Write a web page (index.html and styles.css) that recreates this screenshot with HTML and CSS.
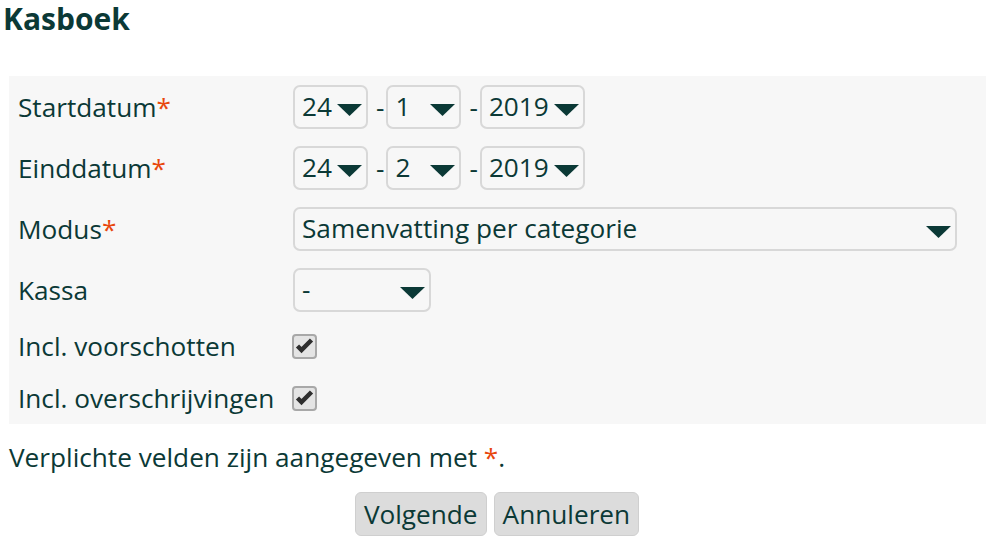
FILE: index.html
```html
<!DOCTYPE html>
<html lang="nl">
<head>
<meta charset="utf-8">
<title>Kasboek</title>
<link rel="stylesheet" href="styles.css">
</head>
<body>
<h1 class="title">Kasboek</h1>
<div class="panel">
  <div class="row">
    <div class="label">Startdatum<span class="req">*</span></div>
    <div class="field">
      <div class="sel w-day"><span>24</span><svg class="arrow" viewBox="0 0 25 12"><polygon points="0,0 25,0 12.5,12"/></svg></div>
      <span class="dash">-</span>
      <div class="sel w-day"><span>1</span><svg class="arrow" viewBox="0 0 25 12"><polygon points="0,0 25,0 12.5,12"/></svg></div>
      <span class="dash">-</span>
      <div class="sel w-year"><span>2019</span><svg class="arrow" viewBox="0 0 25 12"><polygon points="0,0 25,0 12.5,12"/></svg></div>
    </div>
  </div>
  <div class="row">
    <div class="label">Einddatum<span class="req">*</span></div>
    <div class="field">
      <div class="sel w-day"><span>24</span><svg class="arrow" viewBox="0 0 25 12"><polygon points="0,0 25,0 12.5,12"/></svg></div>
      <span class="dash">-</span>
      <div class="sel w-day"><span>2</span><svg class="arrow" viewBox="0 0 25 12"><polygon points="0,0 25,0 12.5,12"/></svg></div>
      <span class="dash">-</span>
      <div class="sel w-year"><span>2019</span><svg class="arrow" viewBox="0 0 25 12"><polygon points="0,0 25,0 12.5,12"/></svg></div>
    </div>
  </div>
  <div class="row">
    <div class="label">Modus<span class="req">*</span></div>
    <div class="field">
      <div class="sel w-mode"><span>Samenvatting per categorie</span><svg class="arrow" viewBox="0 0 25 12"><polygon points="0,0 25,0 12.5,12"/></svg></div>
    </div>
  </div>
  <div class="row">
    <div class="label">Kassa</div>
    <div class="field">
      <div class="sel w-kassa"><span>-</span><svg class="arrow" viewBox="0 0 25 12"><polygon points="0,0 25,0 12.5,12"/></svg></div>
    </div>
  </div>
  <div class="row row-check">
    <div class="label">Incl. voorschotten</div>
    <div class="field">
      <span class="check"><svg viewBox="0 0 21 21"><polyline points="3.5,10 7.5,14 17.5,4"/></svg></span>
    </div>
  </div>
  <div class="row row-check">
    <div class="label">Incl. overschrijvingen</div>
    <div class="field">
      <span class="check"><svg viewBox="0 0 21 21"><polyline points="3.5,10 7.5,14 17.5,4"/></svg></span>
    </div>
  </div>
</div>
<p class="note">Verplichte velden zijn aangegeven met <span class="req">*</span>.</p>
<div class="buttons">
  <button class="btn">Volgende</button>
  <button class="btn">Annuleren</button>
</div>
</body>
</html>
```
FILE: styles.css
```css
html, body {
  margin: 0;
  padding: 0;
  background: #ffffff;
}
body {
  font-family: "Open Sans", "Noto Sans", sans-serif;
  font-size: 26.2px;
  color: #0b3936;
}
.title {
  margin: 0;
  padding: 2px 0 0 3px;
  font-size: 30px;
  line-height: 34px;
  font-weight: 700;
}
.panel {
  margin: 40px 8px 0 9px;
  background: #f7f7f7;
}
.row {
  display: flex;
  align-items: center;
  padding: 8.5px 9px;
}
.row-check {
  line-height: 35px;
}
.label {
  width: 275px;
  flex: none;
}
.req {
  color: #e8470e;
}
.field {
  display: flex;
  align-items: center;
}
.sel {
  box-sizing: border-box;
  height: 44px;
  display: flex;
  align-items: center;
  justify-content: space-between;
  border: 2px solid #d8d8d8;
  border-radius: 7px;
  padding: 0 4px 0 7px;
  background: #f7f7f7;
  line-height: 1;
}
.w-day { width: 75px; }
.w-year { width: 105px; }
.w-mode { width: 664px; }
.w-kassa { width: 138px; }
.arrow {
  width: 25px;
  height: 12px;
  margin-top: 7px;
  fill: #0b3936;
  flex: none;
}
.dash {
  margin: 0 2px 0 8px;
}
.check {
  box-sizing: border-box;
  width: 25px;
  height: 25px;
  margin-left: -1px;
  border: 2px solid #a8a8a8;
  border-radius: 4px;
  background: #e4e4e4;
  display: inline-flex;
}
.check svg {
  width: 21px;
  height: 21px;
  fill: none;
  stroke: #2e2e2e;
  stroke-width: 4.5;
  stroke-linejoin: miter;
}
.note {
  margin: 16px 0 0 9px;
  line-height: 35px;
}
.buttons {
  display: flex;
  justify-content: center;
  gap: 7px;
  margin-top: 17px;
}
.btn {
  box-sizing: border-box;
  height: 44px;
  padding: 0 8px;
  border: 1px solid #cfcfcf;
  border-radius: 6px;
  background: #dcdcdc;
  font-family: "Open Sans", "Noto Sans", sans-serif;
  font-size: 26.2px;
  color: #0b3936;
}
```
